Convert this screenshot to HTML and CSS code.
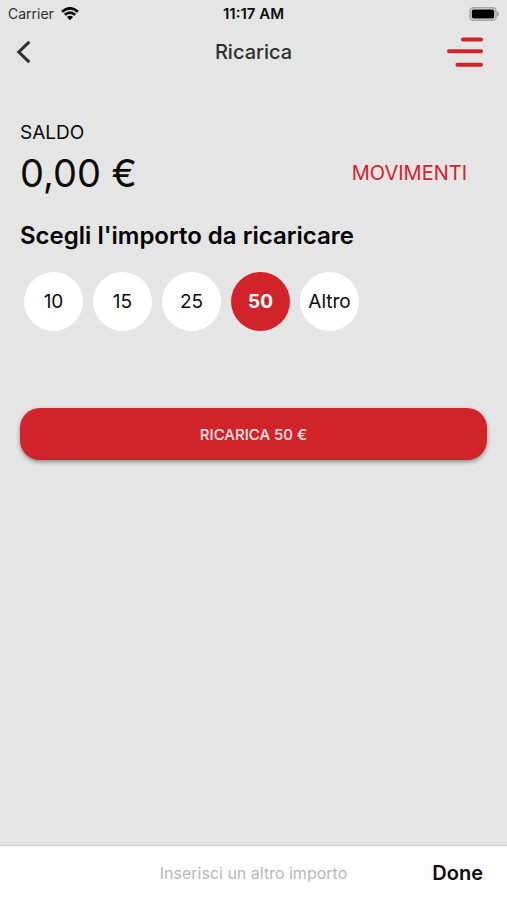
FILE: index.html
```html
<!DOCTYPE html>
<html lang="it">
<head>
    <meta charset="UTF-8">
    <meta name="viewport" content="width=device-width, initial-scale=1.0">
    <title>Ricarica</title>
    <link rel="stylesheet" href="styles.css">
</head>
<body>
    <div class="status-bar">
        <div class="carrier">
            <span>Carrier</span>
            <svg class="wifi" viewBox="0 0 18 14" aria-hidden="true">
                <path d="M1 4.7Q9-2 17 4.7M3.8 7.8Q9 3.4 14.2 7.8"/>
                <path class="dot" d="M5.9 10Q9 7.4 12.1 10L9 13.3Z"/>
            </svg>
        </div>
        <span class="time">11:17 AM</span>
        <svg class="battery" viewBox="0 0 30 14" aria-hidden="true">
            <rect class="shell" x="1" y="0.8" width="26" height="12.4" rx="3.5"/>
            <rect x="2.8" y="2.4" width="22.4" height="9.2" rx="1.8"/>
            <path class="tip" d="M28 4.5Q30 5 30 7T28 9.5Z"/>
        </svg>
    </div>

    <header>
        <button class="back" aria-label="Indietro">
            <svg viewBox="0 0 16 24" aria-hidden="true"><path d="M13.3 1.8L2.8 12L13.3 22.2"/></svg>
        </button>
        <h1>Ricarica</h1>
        <button class="menu" aria-label="Menu">
            <svg viewBox="0 0 36 32" aria-hidden="true"><path d="M16 3.5H34M2 15.3H34M10.5 28.8H34"/></svg>
        </button>
    </header>

    <main>
        <section class="balance">
            <div>
                <p class="label">SALDO</p>
                <p class="amount">0,00 €</p>
            </div>
            <a href="#">MOVIMENTI</a>
        </section>

        <section class="topup">
            <h2>Scegli l'importo da ricaricare</h2>
            <div class="choices">
                <button>10</button>
                <button>15</button>
                <button>25</button>
                <button class="selected">50</button>
                <button>Altro</button>
            </div>
            <button class="submit">RICARICA 50 €</button>
        </section>
    </main>

    <footer>
        <p>Inserisci un altro importo</p>
        <button class="done">Done</button>
    </footer>
</body>
</html>
```
FILE: styles.css
```css
:root {
    --primary: #d2232a;
    --background: #e5e5e5;
}

* {
    box-sizing: border-box;
}

body {
    margin: 0;
    min-height: 100vh;
    display: flex;
    flex-direction: column;
    font-family: Inter, sans-serif;
    background-color: var(--background);
    color: #0b0b0b;
}

h1, h2, p {
    margin: 0;
}

button {
    padding: 0;
    border: none;
    background: none;
    color: inherit;
    font-family: inherit;
    cursor: pointer;
}

svg {
    display: block;
}

.status-bar {
    display: grid;
    grid-template-columns: 1fr auto 1fr;
    align-items: center;
    height: 27px;
    padding: 0 8px;
    font-size: 14px;
}

.carrier {
    display: flex;
    align-items: center;
    gap: 7px;
    color: #303030;
}

.wifi {
    width: 18px;
    height: 14px;
    fill: none;
    stroke: #0b0b0b;
    stroke-width: 2.8;
}

.wifi .dot {
    fill: #0b0b0b;
    stroke: none;
}

.time {
    font-size: 15px;
    font-weight: 600;
}

.battery {
    width: 30px;
    height: 14px;
    justify-self: end;
}

.battery .shell {
    fill: none;
    stroke: #a3a3a3;
    stroke-width: 1.5;
}

.battery .tip {
    fill: #a3a3a3;
}

header {
    display: grid;
    grid-template-columns: 1fr auto 1fr;
    align-items: center;
    height: 50px;
    padding: 0 16px;
}

header h1 {
    font-size: 20px;
    font-weight: 500;
    color: #303030;
}

.back {
    justify-self: start;
}

.back svg {
    width: 16px;
    height: 24px;
    fill: none;
    stroke: #303030;
    stroke-width: 3;
}

.menu {
    justify-self: end;
    margin-right: 8px;
}

.menu svg {
    width: 36px;
    height: 32px;
    stroke: var(--primary);
    stroke-width: 4;
    stroke-linecap: round;
}

main {
    flex: 1;
    padding: 44px 20px;
}

.balance {
    display: flex;
    justify-content: space-between;
    align-items: flex-end;
    padding-right: 20px;
}

.balance .label {
    font-size: 19px;
    line-height: 24px;
}

.balance .amount {
    font-size: 38px;
    line-height: 56px;
}

.balance a {
    color: var(--primary);
    font-size: 20px;
    line-height: 56px;
    text-decoration: none;
}

.topup h2 {
    margin-top: 19px;
    font-size: 24px;
    line-height: 32px;
    font-weight: 600;
    color: #000;
}

.choices {
    display: flex;
    gap: 10px;
    padding: 20px 4px 0;
}

.choices button {
    width: 59px;
    height: 59px;
    border-radius: 50%;
    background: white;
    font-size: 19px;
}

.choices .selected {
    background: var(--primary);
    color: white;
    font-weight: 700;
}

.submit {
    display: block;
    width: 100%;
    height: 52px;
    margin-top: 77px;
    border-radius: 20px;
    background: var(--primary);
    box-shadow: 0 2px 4px rgba(0, 0, 0, 0.4);
    color: #fbe9ea;
    font-size: 15px;
    font-weight: 500;
}

footer {
    display: grid;
    grid-template-columns: 1fr auto 1fr;
    align-items: center;
    height: 55px;
    padding: 0 24px;
    border-top: 1px solid #d0d0d0;
    background: #fdfdfd;
}

footer p {
    grid-column: 2;
    color: #b8b8b8;
    font-size: 16px;
}

.done {
    justify-self: end;
    font-size: 20px;
    font-weight: 600;
}
```
